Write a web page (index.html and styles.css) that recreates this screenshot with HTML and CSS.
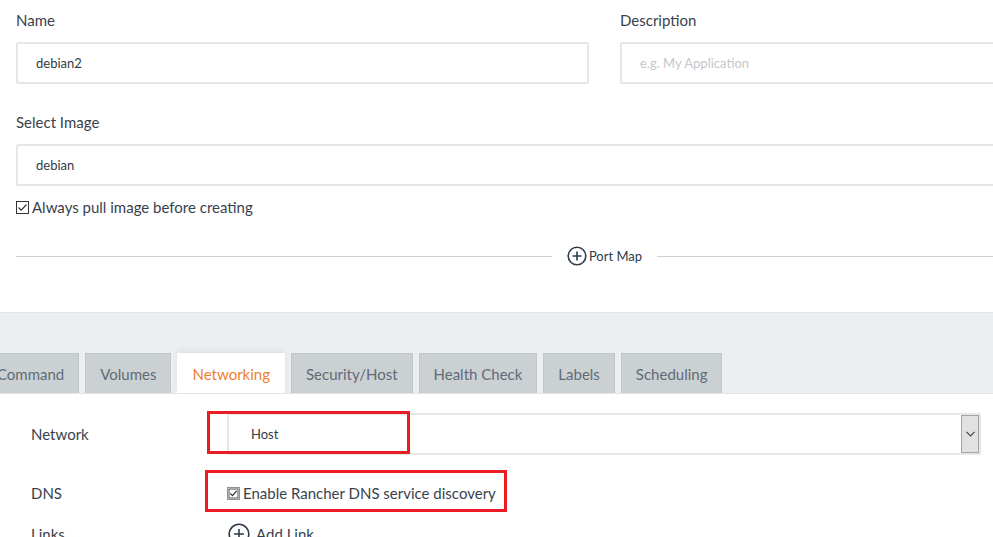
FILE: index.html
```html
<!DOCTYPE html>
<html>
<head>
<meta charset="utf-8">
<link rel="stylesheet" href="styles.css">
</head>
<body>
<div class="page">
  <div class="top">
    <div class="row2">
      <div class="field">
        <div class="lbl">Name</div>
        <div class="input">debian2</div>
      </div>
      <div class="field">
        <div class="lbl">Description</div>
        <div class="input placeholder">e.g. My Application</div>
      </div>
    </div>
    <div class="field full">
      <div class="lbl">Select Image</div>
      <div class="input">debian</div>
    </div>
    <div class="check-row">
      <svg class="cb" width="13" height="13" viewBox="0 0 13 13"><rect x="0.5" y="0.5" width="12" height="12" fill="#fff" stroke="#333"/><path d="M2.5 6.5 L5.2 9.2 L10.5 3.5" fill="none" stroke="#333" stroke-width="1.2"/></svg>
      <span>Always pull image before creating</span>
    </div>
    <div class="divider">
      <span class="line"></span>
      <span class="pm">
        <svg width="20" height="20" viewBox="0 0 20 20"><circle cx="10" cy="10" r="8.8" fill="none" stroke="#2d3b4c" stroke-width="1.6"/><path d="M10 5.5 V14.5 M5.5 10 H14.5" stroke="#2d3b4c" stroke-width="1.6"/></svg>
        <span>Port Map</span>
      </span>
      <span class="line"></span>
    </div>
  </div>

  <div class="tabs-area">
    <div class="tabs">
      <div class="tab">Command</div>
      <div class="tab">Volumes</div>
      <div class="tab active">Networking</div>
      <div class="tab">Security/Host</div>
      <div class="tab">Health Check</div>
      <div class="tab">Labels</div>
      <div class="tab">Scheduling</div>
    </div>
  </div>

  <div class="form">
    <div class="frow">
      <div class="flbl">Network</div>
      <div class="select">
        <span class="sel-text">Host</span>
        <span class="arrow"><svg width="9" height="6" viewBox="0 0 9 6"><path d="M0.5 0.8 L4.5 4.8 L8.5 0.8" fill="none" stroke="#444" stroke-width="1.2"/></svg></span>
      </div>
    </div>
    <div class="frow dns">
      <div class="flbl">DNS</div>
      <div class="check-row">
        <svg class="cb" width="13" height="13" viewBox="0 0 13 13"><rect x="0.5" y="0.5" width="12" height="12" fill="#fff" stroke="#222" stroke-dasharray="1 1"/><rect x="2" y="2" width="9" height="9" fill="#fff" stroke="#555"/><path d="M3.3 6.4 L5.4 8.6 L9.8 3.8" fill="none" stroke="#333" stroke-width="1.2"/></svg>
        <span>Enable Rancher DNS service discovery</span>
      </div>
    </div>
    <div class="frow links">
      <div class="flbl">Links</div>
      <div class="add">
        <svg width="22" height="22" viewBox="0 0 22 22"><circle cx="11" cy="11" r="9.8" fill="none" stroke="#2d3b4c" stroke-width="1.6"/><path d="M11 6 V16 M6 11 H16" stroke="#2d3b4c" stroke-width="1.6"/></svg>
        <span>Add Link</span>
      </div>
    </div>
  </div>

  <div class="mark mark1"></div>
  <div class="mark mark2"></div>
</div>
</body>
</html>
```

FILE: styles.css
```css
* { box-sizing: border-box; }
html, body { margin: 0; padding: 0; }
body {
  background: #fff;
  font-family: Lato, "Open Sans", sans-serif;
  color: #3a3f4d;
  overflow: hidden;
  width: 993px;
  height: 537px;
}
.page {
  position: relative;
  width: 993px;
  height: 537px;
  overflow: hidden;
}
.top {
  width: 1193px;
  padding: 10px 0 0 16px;
}
.row2 {
  display: flex;
  gap: 31px;
}
.field { width: 573px; }
.field.full { width: 1177px; margin-top: 28px; }
.lbl {
  font-size: 15px;
  line-height: 20px;
  height: 20px;
  margin-bottom: 12px;
}
.input {
  height: 42px;
  border: 2px solid #e3e7e7;
  border-radius: 2px;
  padding: 0 0 0 18px;
  font-size: 13px;
  line-height: 39px;
  color: #333a46;
}
.input.placeholder { color: #c4c8cb; }
.check-row {
  display: flex;
  align-items: center;
  gap: 3px;
  font-size: 15px;
  line-height: 20px;
  height: 20px;
}
.top .check-row { margin-top: 11px; }
.cb { flex: none; }
.divider {
  display: flex;
  align-items: center;
  margin-top: 29px;
  height: 20px;
  width: 1177px;
}
.line {
  flex: 1;
  height: 1px;
  background: #cfd1d3;
}
.pm {
  display: flex;
  align-items: center;
  gap: 2px;
  padding: 0 15px;
  font-size: 13px;
  color: #2d3b4c;
}
.tabs-area {
  margin-top: 46px;
  background: #ebeff0;
  border-top: 1px solid #dfe4e5;
  border-bottom: 1px solid #e2e6e7;
  padding-top: 40px;
  height: 82px;
}
.tabs {
  display: flex;
  gap: 6px;
  margin-left: -18px;
}
.tab {
  height: 40px;
  padding: 0 14px;
  background: #cbd0d3;
  border: 1px solid #c2c7ca;
  border-bottom: none;
  font-size: 15px;
  line-height: 40px;
  color: #5f6b78;
  white-space: nowrap;
}
.tab.active {
  background: #fff;
  border-color: #fff;
  color: #ef7f2a;
  box-shadow: 0 -3px 6px rgba(0,0,0,0.06);
}
.form {
  padding: 19px 0 0 31px;
}
.frow {
  display: flex;
  align-items: center;
  height: 42px;
}
.flbl {
  width: 196px;
  font-size: 15px;
  color: #3a3f4d;
}
.select {
  width: 754px;
  height: 42px;
  border: 2px solid #e3e7e7;
  display: flex;
  align-items: center;
  justify-content: space-between;
  padding: 0 0 0 22px;
  font-size: 13px;
  color: #333a46;
}
.arrow {
  width: 18px;
  height: 38px;
  background: #e1e1e1;
  border: 1px solid #a4a4a4;
  display: flex;
  align-items: center;
  justify-content: center;
}
.frow.dns { margin-top: 17px; }
.frow.links { margin-top: 2px; height: 36px; }
.add {
  display: flex;
  align-items: center;
  gap: 6px;
  font-size: 15px;
  margin-left: 1px;
}
.mark {
  position: absolute;
  border: 3px solid #ec1c24;
}
.mark1 { left: 207px; top: 411px; width: 203px; height: 43px; }
.mark2 { left: 205px; top: 470px; width: 302px; height: 42px; }
```
